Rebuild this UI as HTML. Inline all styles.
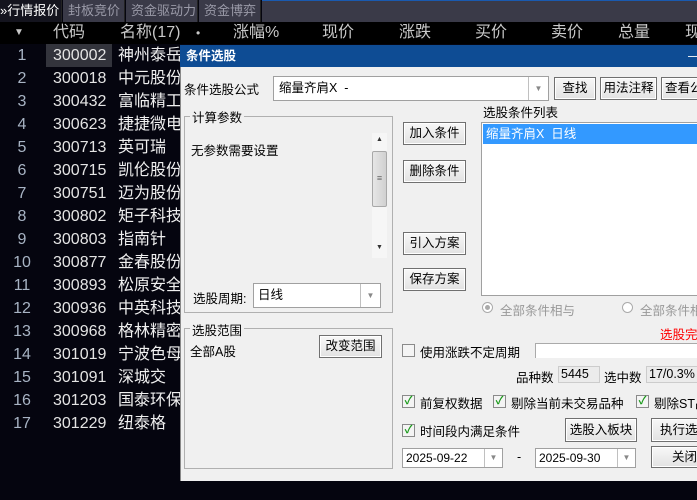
<!DOCTYPE html>
<html><head><meta charset="utf-8"><style>
*{margin:0;padding:0;box-sizing:border-box}
body{width:697px;height:500px;background:#05050f;position:relative;overflow:hidden;font-family:"Liberation Sans","Noto Sans CJK SC",sans-serif}
.a{position:absolute;white-space:nowrap}
.tab{position:absolute;top:0;height:22px;background:#3a3a48;color:#9a9aa8;font-size:13px;line-height:22px;padding-left:5px;border-right:1px solid #222;overflow:hidden;white-space:nowrap}
.h{color:#c8c8c8;font-size:16px;top:22px;line-height:22px}
.r{font-size:16px;line-height:23px;height:23px}
.d{font-size:12.5px;color:#000}
.btn{position:absolute;background:linear-gradient(#f8f8f8,#e2e2e2);border:1px solid #707070;font-size:12.5px;text-align:center;line-height:20px;color:#000;box-shadow:inset 0 0 0 1px #fff}
.box{position:absolute;background:#fff;border:1px solid #a0a0a0}
.grp{position:absolute;border:1px solid #b0b0b0}
.cb{position:absolute;width:13px;height:13px;border:1px solid #8a8a8a;background:#f4f4f4;font-size:11px;line-height:11px;color:#1a9a1a;text-align:center;font-weight:bold}
.dd{position:absolute;right:0;top:0;bottom:0;width:20px;border-left:1px solid #c0c0c0;color:#888;font-size:8px;text-align:center}
</style></head><body>
<div class="tab" style="left:0;width:62px;background:#14141e;color:#fff;padding-left:0">»行情报价</div>
<div class="tab" style="left:63px;width:62px">封板竞价</div>
<div class="tab" style="left:126px;width:72px">资金驱动力</div>
<div class="tab" style="left:199px;width:62px">资金博弈</div>
<div class="a" style="left:262px;top:0;width:435px;height:22px;background:#3a3a48;border-top:1px solid #1a5ab0"></div>
<div class="a" style="left:0;top:22px;width:697px;height:22px;background:#000"></div>
<div class="a h" style="left:14px;font-size:10px">▼</div>
<div class="a h" style="left:53px">代码</div>
<div class="a h" style="left:120px">名称(17)</div>
<div class="a h" style="left:196px;font-size:12px">•</div>
<div class="a h" style="left:233px">涨幅%</div>
<div class="a h" style="left:322px">现价</div>
<div class="a h" style="left:399px">涨跌</div>
<div class="a h" style="left:475px">买价</div>
<div class="a h" style="left:551px">卖价</div>
<div class="a h" style="left:618px">总量</div>
<div class="a h" style="left:685px">现</div>
<div class="a" style="left:46px;top:44px;width:66px;height:23px;background:#33343c"></div>
<div id="rows"></div>
<script>
var d=[["300002","神州泰岳"],["300018","中元股份"],["300432","富临精工"],["300623","捷捷微电"],["300713","英可瑞"],["300715","凯伦股份"],["300751","迈为股份"],["300802","矩子科技"],["300803","指南针"],["300877","金春股份"],["300893","松原安全"],["300936","中英科技"],["300968","格林精密"],["301019","宁波色母"],["301091","深城交"],["301203","国泰环保"],["301229","纽泰格"]];
var h="";d.forEach(function(x,i){var t=44+i*23;h+='<div class="a r" style="left:0;width:44px;text-align:center;top:'+t+'px;color:#a8b4c4">'+(i+1)+'</div><div class="a r" style="left:53px;top:'+t+'px;color:#e4e4e4">'+x[0]+'</div><div class="a r" style="left:118px;top:'+t+'px;color:#f0f0f0">'+x[1]+'</div>';});
document.getElementById("rows").innerHTML=h;
</script>
<div class="a" style="left:180px;top:45px;width:517px;height:436px;background:#f0f0f0;border-left:1px solid #888"></div>
<div class="a" style="left:180px;top:45px;width:517px;height:22px;background:#0e4c94;color:#fff;font-weight:bold;font-size:12.5px;line-height:22px;padding-left:6px">条件选股<span style="position:absolute;left:508px;font-weight:normal">—</span></div>
<div class="a d" style="left:184px;top:79px">条件选股公式</div>
<div class="box" style="left:273px;top:76px;width:276px;height:25px;font-size:12.5px;line-height:23px;padding-left:5px">缩量齐肩X&nbsp; -<div class="dd" style="line-height:23px">▼</div></div>
<div class="btn" style="left:554px;top:77px;width:42px;height:23px">查找</div>
<div class="btn" style="left:600px;top:77px;width:57px;height:23px">用法注释</div>
<div class="btn" style="left:661px;top:77px;width:50px;height:23px;text-align:left;padding-left:3px">查看公</div>
<div class="grp" style="left:184px;top:116px;width:209px;height:197px"></div>
<div class="a d" style="left:190px;top:107px;background:#f0f0f0;padding:0 2px">计算参数</div>
<div class="a d" style="left:191px;top:140px">无参数需要设置</div>
<div class="a" style="left:372px;top:133px;width:15px;height:125px;background:#f6f6f6"></div>
<div class="a" style="left:372px;top:151px;width:15px;height:56px;background:linear-gradient(90deg,#e6e6e6,#d0d0d0);border:1px solid #a8a8a8;border-radius:2px;font-size:9px;text-align:center;line-height:52px;color:#666">≡</div>
<div class="a" style="left:376px;top:136px;font-size:7px;color:#333">▲</div>
<div class="a" style="left:376px;top:244px;font-size:7px;color:#333">▼</div>
<div class="btn" style="left:403px;top:122px;width:63px;height:23px">加入条件</div>
<div class="btn" style="left:403px;top:160px;width:63px;height:23px">删除条件</div>
<div class="btn" style="left:403px;top:232px;width:63px;height:23px">引入方案</div>
<div class="btn" style="left:403px;top:268px;width:63px;height:23px">保存方案</div>
<div class="a d" style="left:193px;top:288px">选股周期:</div>
<div class="box" style="left:253px;top:283px;width:128px;height:25px;font-size:12.5px;line-height:23px;padding-left:4px">日线<div class="dd" style="line-height:23px">▼</div></div>
<div class="a d" style="left:483px;top:102px">选股条件列表</div>
<div class="box" style="left:481px;top:122px;width:220px;height:174px"><div style="margin:1px;height:20px;background:#3399ff;color:#fff;font-size:12.5px;line-height:20px;padding-left:3px">缩量齐肩X&nbsp; 日线</div></div>
<div class="a" style="left:482px;top:302px;width:11px;height:11px;border:1px solid #aaa;border-radius:50%;background:#fff"><div style="margin:2px;width:5px;height:5px;border-radius:50%;background:#aaa"></div></div>
<div class="a d" style="left:500px;top:300px;color:#999">全部条件相与</div>
<div class="a" style="left:622px;top:302px;width:11px;height:11px;border:1px solid #aaa;border-radius:50%;background:#fff"></div>
<div class="a d" style="left:640px;top:300px;color:#999">全部条件相</div>
<div class="grp" style="left:184px;top:328px;width:209px;height:141px"></div>
<div class="a d" style="left:190px;top:320px;background:#f0f0f0;padding:0 2px">选股范围</div>
<div class="a d" style="left:190px;top:341px">全部A股</div>
<div class="btn" style="left:319px;top:335px;width:63px;height:23px">改变范围</div>
<div class="a d" style="left:660px;top:324px;color:#f00">选股完</div>
<div class="cb" style="left:402px;top:344px"></div>
<div class="a d" style="left:420px;top:342px">使用涨跌不定周期</div>
<div class="a" style="left:535px;top:343px;width:165px;height:15px;background:#fff;border:1px solid #aaa;border-bottom:none"></div>
<div class="a d" style="left:516px;top:367px">品种数</div>
<div class="a d" style="left:558px;top:366px;width:42px;height:17px;border:1px solid #ccc;background:#ebebeb;padding-left:2px;line-height:15px">5445</div>
<div class="a d" style="left:604px;top:367px">选中数</div>
<div class="a d" style="left:646px;top:366px;width:60px;height:17px;border:1px solid #ccc;background:#ebebeb;padding-left:2px;line-height:15px">17/0.3%</div>
<div class="cb" style="left:402px;top:395px">✓</div><div class="a d" style="left:420px;top:393px">前复权数据</div>
<div class="cb" style="left:493px;top:395px">✓</div><div class="a d" style="left:511px;top:393px">剔除当前未交易品种</div>
<div class="cb" style="left:636px;top:395px">✓</div><div class="a d" style="left:654px;top:393px">剔除ST品</div>
<div class="cb" style="left:402px;top:424px">✓</div><div class="a d" style="left:420px;top:421px">时间段内满足条件</div>
<div class="btn" style="left:565px;top:418px;width:72px;height:24px;line-height:22px">选股入板块</div>
<div class="btn" style="left:651px;top:418px;width:60px;height:24px;line-height:22px;text-align:left;padding-left:8px">执行选</div>
<div class="box" style="left:402px;top:448px;width:101px;height:20px;font-size:12px;line-height:18px;padding-left:3px">2025-09-22<div class="dd" style="width:18px;line-height:18px">▼</div></div>
<div class="a d" style="left:517px;top:450px">-</div>
<div class="box" style="left:535px;top:448px;width:101px;height:20px;font-size:12px;line-height:18px;padding-left:3px">2025-09-30<div class="dd" style="width:18px;line-height:18px">▼</div></div>
<div class="btn" style="left:651px;top:446px;width:60px;height:22px;text-align:left;padding-left:20px">关闭</div>
</body></html>
